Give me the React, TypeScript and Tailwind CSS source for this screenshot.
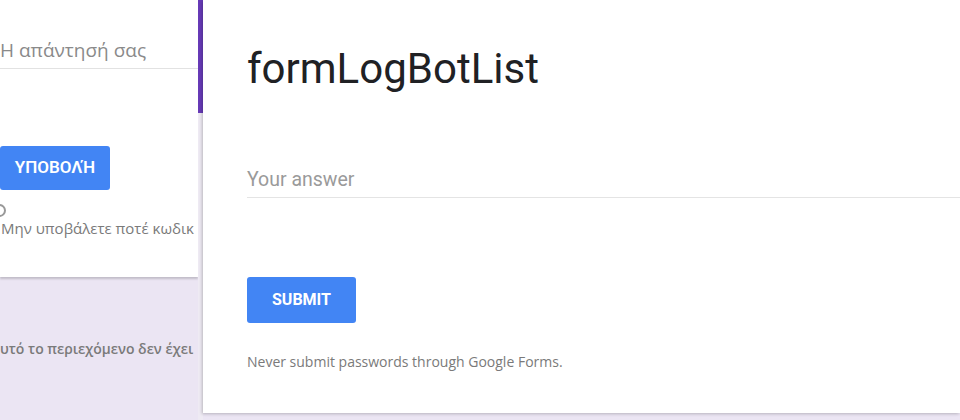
export default function App() {
  return (
    <div className="flex h-[420px] w-[960px] overflow-hidden bg-[#ebe5f3] font-['Roboto',sans-serif]">
      {/* back form, partly hidden */}
      <div className="flex w-[198px] shrink-0 flex-col">
        <div className="h-[277px] overflow-hidden bg-white shadow-[0_2px_2px_rgba(0,0,0,0.18)]">
          <div className="mt-[38px] whitespace-nowrap border-b border-[#e2e2e2] pb-[5px] font-['Open_Sans',sans-serif] text-[19px] leading-[25px] text-[#8a8a8a]">
            Η απάντησή σας
          </div>
          <div className="mt-[77px] flex h-[44px] w-[110px] items-center justify-center rounded-[3px] bg-[#4285f4] text-[17px] font-semibold text-white">
            ΥΠΟΒΟΛΉ
          </div>
          <div className="-ml-[7px] mt-[14px] h-[13px] w-[13px] rounded-full border-2 border-[#999]" />
          <div className="mt-[1px] whitespace-nowrap pl-[1px] font-['Open_Sans',sans-serif] text-[15px] font-medium leading-[20px] text-[#7a7a7a]">
            Μην υποβάλετε ποτέ κωδικ
          </div>
        </div>
        <div className="mt-[62px] whitespace-nowrap font-['Open_Sans',sans-serif] text-[14px] font-semibold leading-[20px] text-[#7a7a7a]">
          υτό το περιεχόμενο δεν έχει
        </div>
      </div>

      {/* header stripe */}
      <div className="w-[5px] shrink-0 bg-[#eeeaf3]">
        <div className="h-[113px] bg-[#673ab7]" />
      </div>

      {/* front form */}
      <div className="h-[413px] flex-1 bg-white pl-[44px] shadow-[-1px_1px_3px_rgba(0,0,0,0.22)]">
        <h1 className="mt-[45px] text-[42px] leading-[48px] font-normal text-[#202124]">formLogBotList</h1>
        <div className="mt-[75px] border-b border-[#e4e4e4] pb-[5px] text-[19.5px] leading-[24px] text-[#9a9a9a]">
          Your answer
        </div>
        <div className="mt-[79px] flex h-[46px] w-[109px] items-center justify-center rounded-[3px] bg-[#4285f4] text-[16px] font-bold text-white">
          SUBMIT
        </div>
        <div className="mt-[29px] font-['Open_Sans',sans-serif] text-[14px] leading-[20px] text-[#7a7a7a]">
          Never submit passwords through Google Forms.
        </div>
      </div>
    </div>
  );
}
